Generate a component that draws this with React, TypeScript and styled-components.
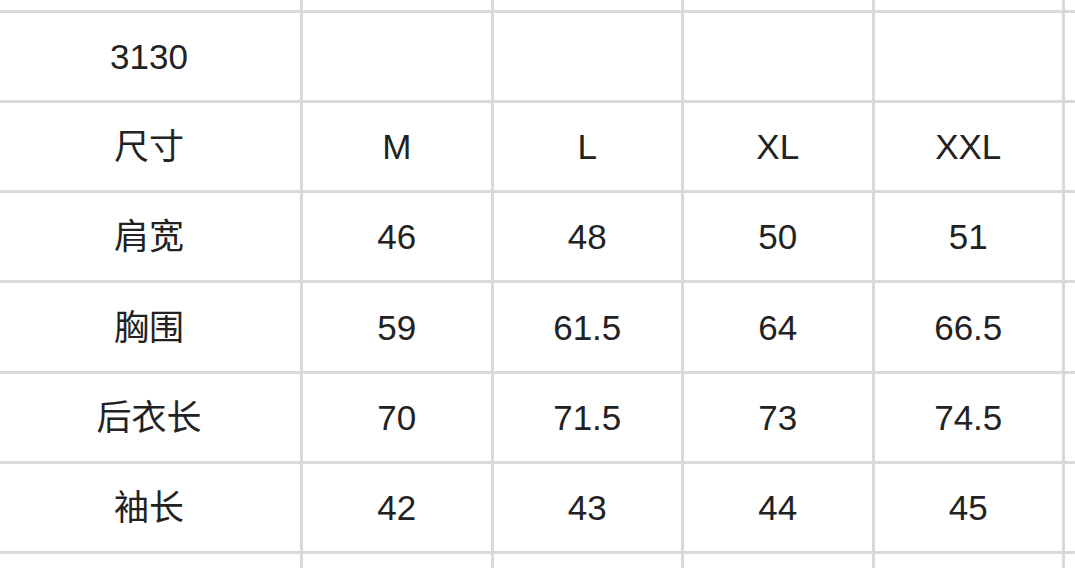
import React from "react";
import styled, { createGlobalStyle } from "styled-components";

const Global = createGlobalStyle`
  html, body {
    margin: 0;
    padding: 0;
    background: #ffffff;
    overflow: hidden;
  }
  body {
    width: 1075px;
    height: 568px;
  }
`;

const Viewport = styled.div`
  width: 1075px;
  height: 568px;
  overflow: hidden;
  background: #ffffff;
`;

const Sheet = styled.div`
  display: grid;
  grid-template-columns: 302px repeat(5, 187.5px);
  grid-auto-rows: 87.17px;
  gap: 3px;
  padding: 3px;
  width: max-content;
  margin: -80.17px 0 0 -5px;
  background: #d9d9d9;
`;

const Cell = styled.div`
  display: flex;
  align-items: center;
  justify-content: center;
  background: #ffffff;
  color: #222222;
  font-family: "Liberation Sans", "Noto Sans CJK SC", Arial, sans-serif;
  font-size: 35px;
  line-height: 1;
  white-space: nowrap;
`;

const rows: string[][] = [
  ["", "", "", "", "", ""],
  ["3130", "", "", "", "", ""],
  ["尺寸", "M", "L", "XL", "XXL", ""],
  ["肩宽", "46", "48", "50", "51", ""],
  ["胸围", "59", "61.5", "64", "66.5", ""],
  ["后衣长", "70", "71.5", "73", "74.5", ""],
  ["袖长", "42", "43", "44", "45", ""],
  ["", "", "", "", "", ""],
];

export default function App() {
  return (
    <Viewport>
      <Global />
      <Sheet>
        {rows.map((row, r) =>
          row.map((text, c) => <Cell key={`${r}-${c}`}>{text}</Cell>)
        )}
      </Sheet>
    </Viewport>
  );
}
